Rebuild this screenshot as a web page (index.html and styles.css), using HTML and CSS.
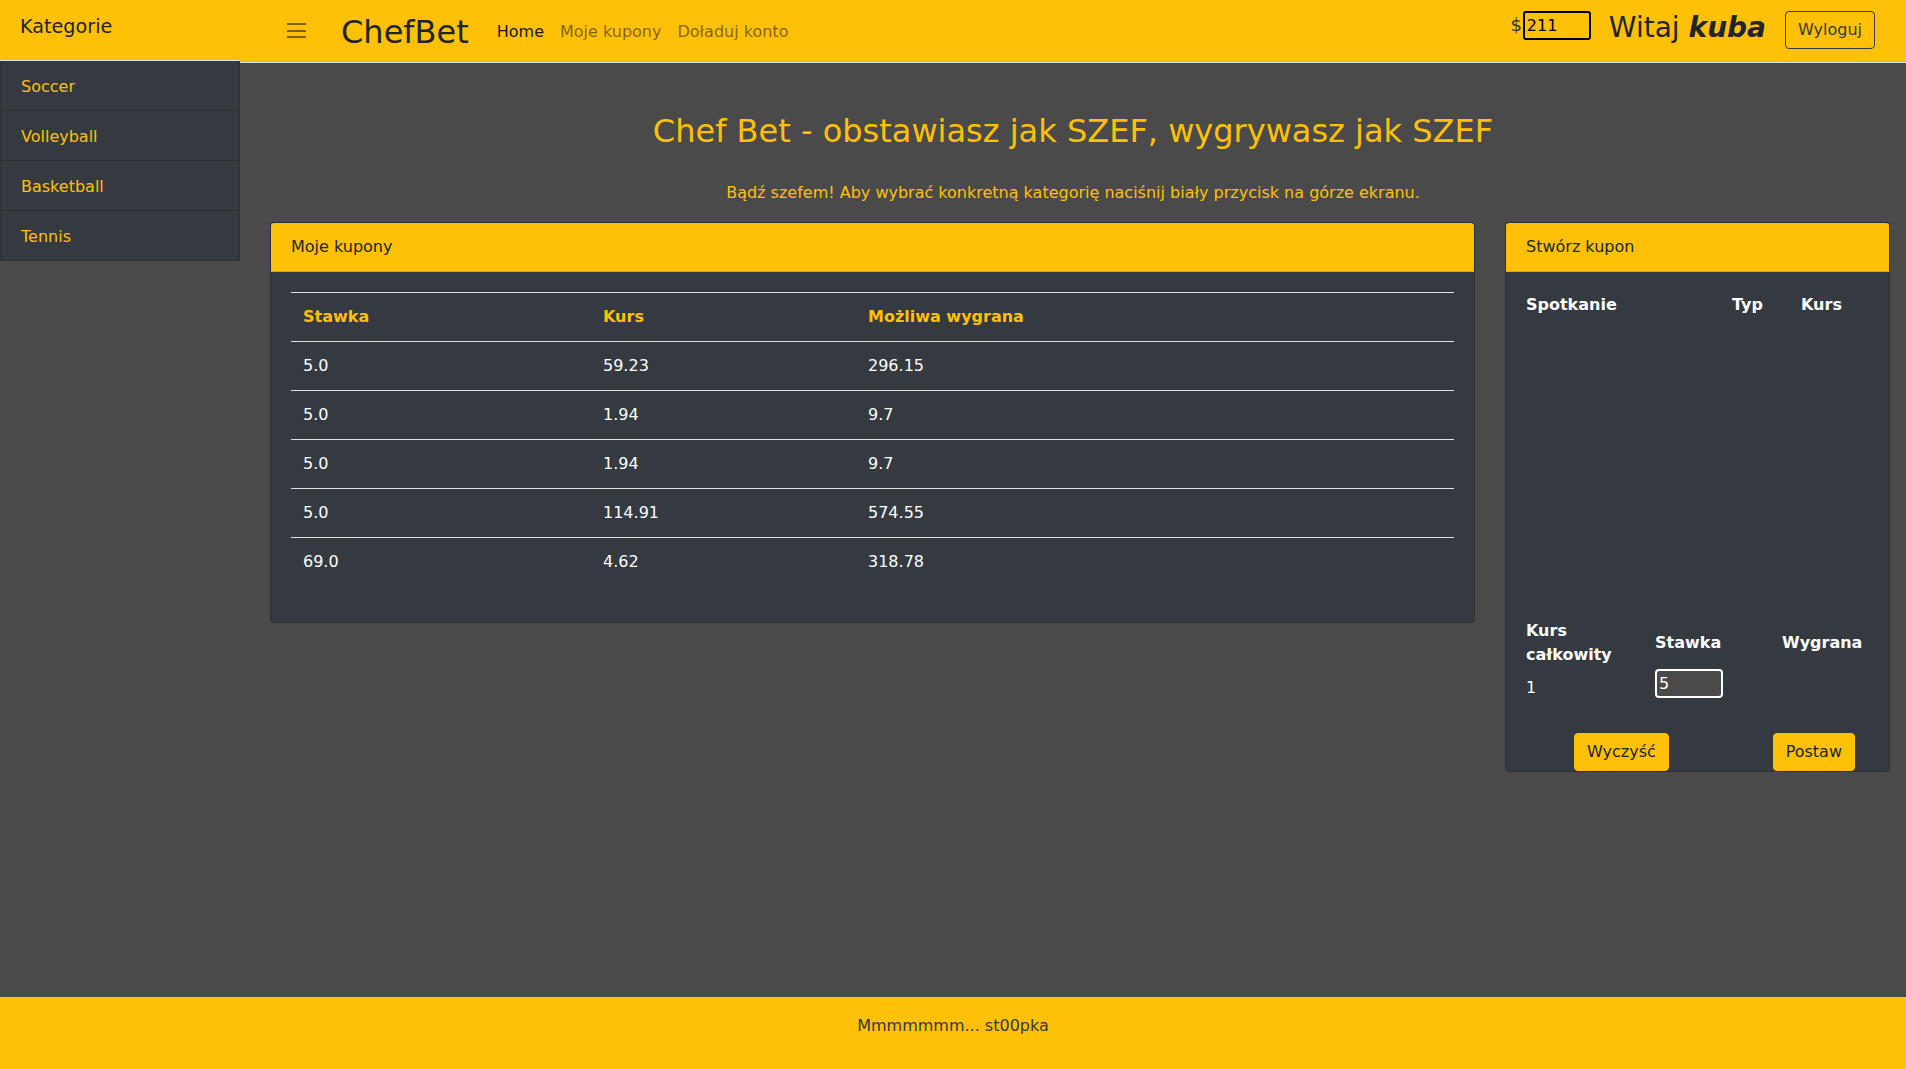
FILE: index.html
```html
<!DOCTYPE html>
<html lang="pl">
<head>
<meta charset="utf-8">
<title>ChefBet</title>
<link rel="stylesheet" href="styles.css">
</head>
<body>
<div class="wrapper">
  <aside class="sidebar">
    <div class="sidebar-heading">Kategorie</div>
    <div class="sidebar-list">
      <a class="sidebar-item" href="#">Soccer</a>
      <a class="sidebar-item" href="#">Volleyball</a>
      <a class="sidebar-item" href="#">Basketball</a>
      <a class="sidebar-item" href="#">Tennis</a>
    </div>
  </aside>
  <div class="page">
    <nav class="navbar">
      <button class="toggler" type="button" aria-label="menu">
        <svg width="19" height="16" viewBox="0 0 19 16"><path d="M0 1h19M0 8h19M0 14h19" stroke="rgba(0,0,0,0.5)" stroke-width="2" fill="none"/></svg>
      </button>
      <a class="brand" href="#">ChefBet</a>
      <ul class="nav-links">
        <li><a class="nav-link active" href="#">Home</a></li>
        <li><a class="nav-link" href="#">Moje kupony</a></li>
        <li><a class="nav-link" href="#">Doładuj konto</a></li>
      </ul>
      <div class="nav-right">
        <div class="balance"><span class="dollar">$</span><input class="balance-input" type="text" value="211"></div>
        <h3 class="greeting">Witaj <em class="user">kuba</em></h3>
        <button class="btn-outline" type="button">Wyloguj</button>
      </div>
    </nav>
    <main class="main">
      <h2 class="title">Chef Bet - obstawiasz jak SZEF, wygrywasz jak SZEF</h2>
      <p class="subtitle">Bądź szefem! Aby wybrać konkretną kategorię naciśnij biały przycisk na górze ekranu.</p>
      <div class="cards">
        <section class="card card-coupons">
          <div class="card-header">Moje kupony</div>
          <div class="card-body">
            <table class="coupons">
              <thead>
                <tr><th class="col-stake">Stawka</th><th class="col-odds">Kurs</th><th>Możliwa wygrana</th></tr>
              </thead>
              <tbody>
                <tr><td>5.0</td><td>59.23</td><td>296.15</td></tr>
                <tr><td>5.0</td><td>1.94</td><td>9.7</td></tr>
                <tr><td>5.0</td><td>1.94</td><td>9.7</td></tr>
                <tr><td>5.0</td><td>114.91</td><td>574.55</td></tr>
                <tr><td>69.0</td><td>4.62</td><td>318.78</td></tr>
              </tbody>
            </table>
          </div>
        </section>
        <section class="card card-create">
          <div class="card-header">Stwórz kupon</div>
          <div class="card-body create-body">
            <div class="matches">
              <div class="matches-head">
                <span>Spotkanie</span><span>Typ</span><span>Kurs</span>
              </div>
            </div>
            <div class="summary">
              <div class="summary-head">Kurs całkowity</div>
              <div class="summary-head">Stawka</div>
              <div class="summary-head">Wygrana</div>
              <div class="summary-odds">1</div>
              <div class="summary-stake"><input class="stake-input" type="text" value="5"></div>
              <div></div>
            </div>
            <div class="actions">
              <button class="btn-yellow" type="button">Wyczyść</button>
              <button class="btn-yellow" type="button">Postaw</button>
            </div>
          </div>
        </section>
      </div>
    </main>
  </div>
</div>
<footer class="footer">Mmmmmmm... st00pka</footer>
</body>
</html>
```
FILE: styles.css
```css
* { box-sizing: border-box; }
html, body { height: 100%; }
body {
  margin: 0;
  font-family: "DejaVu Sans", sans-serif;
  font-size: 16px;
  line-height: 1.5;
  color: #212529;
  background: #4a4a4a;
  display: flex;
  flex-direction: column;
}
.wrapper { display: flex; flex: 1; min-height: 0; }

/* sidebar */
.sidebar { width: 240px; flex: none; }
.sidebar-heading {
  height: 60px;
  background: #ffc107;
  padding: 13px 20px 0;
  font-size: 19.2px;
  line-height: 1.5;
  color: #212529;
}
.sidebar-list { border-top: 1px solid #dee2e6; }
.sidebar-item {
  display: block;
  height: 50px;
  padding: 14px 20px 0;
  background: #343a40;
  color: #ffc107;
  text-decoration: none;
  border: 1px solid #2b3035;
  border-top: none;
}

/* navbar */
.page { flex: 1; display: flex; flex-direction: column; min-width: 0; }
.navbar {
  height: 63px;
  background: #ffc107;
  border-bottom: 1px solid #dee2e6;
  display: flex;
  align-items: center;
  padding: 2px 31px 0 47px;
}
.toggler {
  border: 0;
  background: transparent;
  padding: 0;
  margin: -2px 35px 0 0;
  display: flex;
}
.brand {
  font-size: 32px;
  line-height: 1.5;
  color: #212529;
  text-decoration: none;
  margin-right: 20px;
}
.nav-links { display: flex; list-style: none; margin: 0; padding: 0; }
.nav-link {
  display: block;
  padding: 8px;
  color: rgba(0,0,0,0.5);
  text-decoration: none;
}
.nav-link.active { color: rgba(0,0,0,0.9); }
.nav-right { margin-left: auto; display: flex; align-items: center; }
.balance { display: flex; align-items: center; margin-bottom: 14px; color: #333; }
.dollar { font-size: 18px; line-height: 1; }
.balance-input {
  width: 68px;
  height: 29px;
  margin: 0 0 0 1px;
  padding: 0 2px;
  border: 2px solid #000;
  border-radius: 3px;
  background: transparent;
  font: 16px "DejaVu Sans", sans-serif;
  color: #000;
}
.greeting {
  font-size: 28px;
  font-weight: 400;
  line-height: 1.2;
  margin: 0 19px 8px 18px;
  color: #212529;
}
.user { font-weight: 700; font-style: italic; }
.btn-outline {
  height: 38px;
  padding: 6px 12px;
  border: 1px solid #343a40;
  border-radius: 4px;
  background: transparent;
  color: #343a40;
  font: 16px/24px "DejaVu Sans", sans-serif;
  margin-bottom: 4px;
}

/* main */
.main { flex: 1; }
.title {
  margin: 49px 0 0;
  font-size: 32px;
  font-weight: 400;
  line-height: 1.2;
  color: #ffc107;
  text-align: center;
}
.subtitle {
  margin: 31px 0 17px;
  text-align: center;
  color: #ffc107;
}
.cards {
  display: flex;
  align-items: flex-start;
  gap: 30px;
  margin: 0 16px 0 30px;
}
.card {
  background: #343a40;
  border: 1px solid rgba(0,0,0,0.125);
  border-radius: 4px;
  overflow: hidden;
}
.card-coupons { flex: 1; }
.card-create { width: 385px; flex: none; }
.card-header {
  background: #ffc107;
  padding: 12px 20px;
  border-bottom: 1px solid rgba(0,0,0,0.125);
  color: #212529;
}
.card-body { padding: 20px; }

.coupons { width: 100%; border-collapse: collapse; margin-bottom: 16px; }
.coupons th, .coupons td {
  padding: 12px;
  border-top: 1px solid #dee2e6;
  text-align: left;
  vertical-align: top;
  line-height: 24px;
}
.coupons th { color: #ffc107; font-weight: 700; }
.coupons td { color: #fff; }
.col-stake { width: 300px; }
.col-odds { width: 265px; }

.create-body { padding: 21px 20px 0; }
.matches { min-height: 326px; }
.matches-head {
  display: grid;
  grid-template-columns: 206px 69px 1fr;
  font-weight: 700;
  color: #fff;
}
.summary {
  display: grid;
  grid-template-columns: 129px 127px 1fr;
  align-items: center;
  color: #fff;
}
.summary-head { font-weight: 700; }
.summary-odds, .summary-stake { align-self: start; }
.summary-odds { margin-top: 9px; }
.summary-stake { margin-top: 2px; display: flex; }
.stake-input {
  width: 68px;
  height: 29px;
  margin: 0;
  padding: 0 2px;
  border: 2px solid #fff;
  border-radius: 4px;
  background: #4a4a4a;
  color: #fff;
  font: 16px "DejaVu Sans", sans-serif;
}
.actions {
  display: flex;
  justify-content: space-between;
  padding: 0 14px 0 48px;
  margin-top: 33px;
}
.btn-yellow {
  height: 38px;
  padding: 6px 12px;
  border: 1px solid #ffc107;
  border-radius: 4px;
  background: #ffc107;
  color: #212529;
  font: 16px/24px "DejaVu Sans", sans-serif;
}

.footer {
  flex: none;
  height: 72px;
  padding-top: 17px;
  background: #ffc107;
  color: #343a40;
  text-align: center;
}
```
